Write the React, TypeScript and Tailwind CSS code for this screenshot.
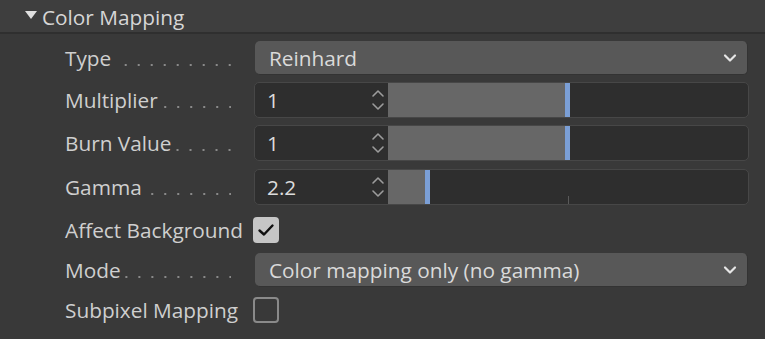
import React from "react";

const font = { fontFamily: '"Open Sans", "Noto Sans", sans-serif' };

function Leader() {
  return (
    <div className="flex-1 h-[2px] translate-y-[7px] ml-1 bg-[linear-gradient(to_left,#8a8a8a_2px,transparent_2px)] bg-[length:13px_2px] bg-repeat-x bg-right" />
  );
}

function Label({ text, dots = true }: { text: string; dots?: boolean }) {
  return (
    <div className="w-[231px] pl-[65px] flex items-center shrink-0">
      <div className="flex-1 flex items-center">
        <span className="whitespace-nowrap text-[20.8px] text-[#cfcfcf] translate-y-[1px]">{text}</span>
        {dots && <Leader />}
      </div>
    </div>
  );
}

function Chevron() {
  return (
    <svg width="14" height="10" viewBox="0 0 14 10" className="mr-[10px]">
      <path d="M2 2.5 L7 7.5 L12 2.5" fill="none" stroke="#e6e6e6" strokeWidth="2.2" strokeLinecap="round" strokeLinejoin="round" />
    </svg>
  );
}

function Spinner() {
  return (
    <svg width="14" height="22" viewBox="0 0 14 22" className="mr-[3px]">
      <path d="M2 7 L7 2 L12 7" fill="none" stroke="#9c9c9c" strokeWidth="1.6" strokeLinecap="round" strokeLinejoin="round" />
      <path d="M2 15 L7 20 L12 15" fill="none" stroke="#9c9c9c" strokeWidth="1.6" strokeLinecap="round" strokeLinejoin="round" />
    </svg>
  );
}

function Dropdown({ value }: { value: string }) {
  return (
    <div className="ml-[24px] w-[493px] h-[34px] rounded-[5px] bg-[#585858] flex items-center justify-between pl-[14px] border-r border-b border-[#333]">
      <span className="text-[20.8px] text-[#dadada] whitespace-nowrap translate-y-[1px]">{value}</span>
      <Chevron />
    </div>
  );
}

function NumSlider({ value, fill, tick }: { value: string; fill: number; tick?: boolean }) {
  return (
    <div className="ml-[23px] w-[495px] h-[36px] rounded-[5px] border border-[#474747] bg-[#2e2e2e] flex overflow-hidden">
      <div className="w-[133px] flex items-center justify-between pl-[12px]">
        <span className="text-[20.8px] text-[#dcdcdc] translate-y-[1px]">{value}</span>
        <Spinner />
      </div>
      <div className="relative flex-1">
        <div className="absolute left-0 top-0 bottom-0 bg-[#676767]" style={{ width: fill }} />
        <div className="absolute top-0 bottom-0 w-[5px] bg-[#7b9fd6]" style={{ left: fill }} />
        {tick && <div className="absolute left-[180px] bottom-0 h-[8px] w-px bg-[#5a5a5a]" />}
      </div>
    </div>
  );
}

function Row({ h, children }: { h: number; children: React.ReactNode }) {
  return (
    <div className="flex items-center" style={{ height: h }}>
      {children}
    </div>
  );
}

export default function App() {
  return (
    <div className="w-[765px] h-[339px] bg-[#393939] overflow-hidden" style={font}>
      <div className="h-[32px] bg-[#3e3e3e] flex items-center">
        <svg width="12" height="9" viewBox="0 0 12 9" className="ml-[25px] mr-[5px] mt-[-1px]">
          <path d="M0 0 L12 0 L6 8 Z" fill="#e0e0e0" />
        </svg>
        <span className="text-[20.8px] text-[#d6d6d6] leading-none mt-[3px]">Color Mapping</span>
      </div>
      <div className="h-[2px] bg-[#2f2f2f]" />
      <div className="pt-[3px]">
        <Row h={42}>
          <Label text="Type" />
          <Dropdown value="Reinhard" />
        </Row>
        <Row h={42}>
          <Label text="Multiplier" />
          <NumSlider value="1" fill={177} />
        </Row>
        <Row h={44}>
          <Label text="Burn Value" />
          <NumSlider value="1" fill={177} />
        </Row>
        <Row h={44}>
          <Label text="Gamma" />
          <NumSlider value="2.2" fill={37} tick />
        </Row>
        <Row h={42}>
          <Label text="Affect Background" dots={false} />
          <div className="ml-[22px] w-[26px] h-[26px] rounded-[4px] bg-[#c6c6c6] flex items-center justify-center">
            <svg width="18" height="14" viewBox="0 0 18 14">
              <path d="M2.5 7.5 L7 11.5 L15.5 2.5" fill="none" stroke="#111" strokeWidth="2.4" strokeLinecap="round" strokeLinejoin="round" />
            </svg>
          </div>
        </Row>
        <Row h={38}>
          <Label text="Mode" />
          <Dropdown value="Color mapping only (no gamma)" />
        </Row>
        <Row h={42}>
          <Label text="Subpixel Mapping" dots={false} />
          <div className="ml-[22px] w-[26px] h-[26px] rounded-[4px] border-2 border-[#8a8a8a]" />
        </Row>
      </div>
    </div>
  );
}
